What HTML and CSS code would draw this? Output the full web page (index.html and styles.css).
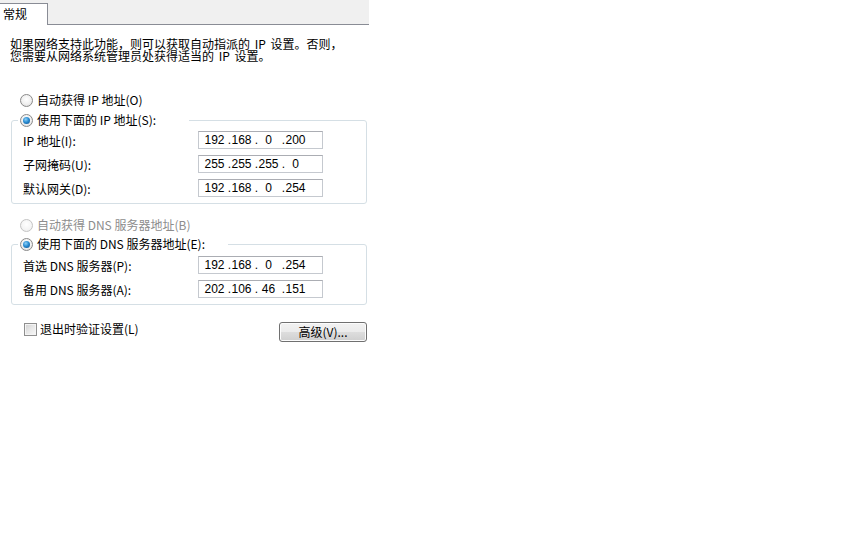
FILE: index.html
```html
<!DOCTYPE html>
<html lang="zh-CN">
<head>
<meta charset="utf-8">
<title>Internet 协议版本 4 (TCP/IPv4) 属性</title>
<link rel="stylesheet" href="styles.css">
</head>
<body>
<div class="panel">
  <div class="tabs">
    <div class="tab">常规</div>
  </div>
  <div class="intro">
    <div class="line">如果网络支持此功能，则可以获取自动指派的 IP 设置。否则，</div>
    <div class="line">您需要从网络系统管理员处获得适当的 IP 设置。</div>
  </div>

  <div class="radio-row first">
    <span class="radio"></span>
    <span>自动获得 IP 地址(O)</span>
  </div>
  <fieldset class="group g1">
    <legend class="legend l1"><span class="radio checked"></span><span>使用下面的 IP 地址(S):</span></legend>
    <div class="field">
      <span class="label">IP 地址(I):</span>
      <div class="ip"><span class="oct">192</span><span class="dot">.</span><span class="oct">168</span><span class="dot">.</span><span class="oct">0</span><span class="dot">.</span><span class="oct">200</span></div>
    </div>
    <div class="field">
      <span class="label">子网掩码(U):</span>
      <div class="ip"><span class="oct">255</span><span class="dot">.</span><span class="oct">255</span><span class="dot">.</span><span class="oct">255</span><span class="dot">.</span><span class="oct">0</span></div>
    </div>
    <div class="field">
      <span class="label">默认网关(D):</span>
      <div class="ip"><span class="oct">192</span><span class="dot">.</span><span class="oct">168</span><span class="dot">.</span><span class="oct">0</span><span class="dot">.</span><span class="oct">254</span></div>
    </div>
  </fieldset>

  <div class="radio-row second disabled">
    <span class="radio"></span>
    <span>自动获得 DNS 服务器地址(B)</span>
  </div>
  <fieldset class="group g2">
    <legend class="legend l2"><span class="radio checked"></span><span>使用下面的 DNS 服务器地址(E):</span></legend>
    <div class="field">
      <span class="label">首选 DNS 服务器(P):</span>
      <div class="ip"><span class="oct">192</span><span class="dot">.</span><span class="oct">168</span><span class="dot">.</span><span class="oct">0</span><span class="dot">.</span><span class="oct">254</span></div>
    </div>
    <div class="field">
      <span class="label">备用 DNS 服务器(A):</span>
      <div class="ip"><span class="oct">202</span><span class="dot">.</span><span class="oct">106</span><span class="dot">.</span><span class="oct">46</span><span class="dot">.</span><span class="oct">151</span></div>
    </div>
  </fieldset>

  <div class="bottom">
    <label class="check-row"><span class="checkbox"></span><span>退出时验证设置(L)</span></label>
    <button class="btn" type="button">高级(V)...</button>
  </div>
</div>
</body>
</html>
```

FILE: styles.css
```css
html, body {
  margin: 0;
  padding: 0;
  background: #ffffff;
}
body {
  font-family: "Noto Sans CJK SC", "Noto Sans", sans-serif;
  font-size: 12px;
  color: #000000;
}
.panel {
  width: 369px;
}
.tabs {
  height: 24px;
  background: #f0f0f0;
  border-bottom: 1px solid #898c95;
  display: flex;
  align-items: flex-end;
}
.tab {
  width: 44px;
  height: 21px;
  margin-bottom: -1px;
  padding-left: 3px;
  background: #ffffff;
  border-top: 1px solid #898c95;
  border-right: 1px solid #898c95;
  line-height: 19px;
}
.intro {
  margin: 13px 0 0 10px;
  white-space: nowrap;
  word-spacing: 2px;
}
.line {
  height: 12px;
  line-height: 12px;
}
.radio-row {
  display: flex;
  align-items: center;
  height: 16px;
  padding-left: 20px;
  gap: 4px;
  line-height: 16px;
}
.radio-row.first {
  margin-top: 30px;
}
.radio-row.second {
  margin-top: 13px;
}
.disabled {
  color: #8d8d8d;
}
.radio {
  box-sizing: border-box;
  width: 13px;
  height: 13px;
  border-radius: 50%;
  border: 1px solid #8a8a8a;
  background: radial-gradient(circle at 50% 40%, #ffffff 0%, #f0f0f0 55%, #d4d4d4 100%);
  display: inline-flex;
  align-items: center;
  justify-content: center;
  flex: none;
}
.disabled .radio {
  border-color: #c4c4c4;
  background: radial-gradient(circle at 50% 40%, #ffffff 0%, #f4f4f4 60%, #e6e6e6 100%);
}
.radio.checked::after {
  content: "";
  width: 7px;
  height: 7px;
  border-radius: 50%;
  background: radial-gradient(circle at 40% 35%, #8fd0f7 0%, #2b8ed3 45%, #0b4a8a 100%);
}
.group {
  margin: 3px 2px 0 11px;
  padding: 0 0 6px 0;
  border: 1px solid #d5dfe5;
  border-radius: 3px;
  min-width: 0;
}
.g1 {
  margin-top: 4px;
}
.legend {
  display: flex;
  align-items: center;
  gap: 4px;
  height: 16px;
  line-height: 16px;
  margin-left: 6px;
  padding: 0 33px 0 2px;
}
.l2 {
  padding-right: 23px;
}
.field {
  display: flex;
  align-items: center;
  height: 18px;
  margin-top: 6px;
}
.g1 .field:first-of-type {
  margin-top: 3px;
}
.g2 .field:first-of-type {
  margin-top: 4px;
}
.label {
  box-sizing: border-box;
  width: 186px;
  padding-left: 11px;
  white-space: nowrap;
}
.ip {
  box-sizing: border-box;
  width: 125px;
  height: 18px;
  border: 1px solid #c5c9cf;
  border-top-color: #abadb3;
  display: flex;
  align-items: center;
  padding-left: 5px;
  line-height: 16px;
  font-family: "Liberation Sans", "Noto Sans", sans-serif;
  font-size: 12px;
  color: #000;
}
.oct {
  width: 21px;
  text-align: center;
}
.dot {
  width: 6px;
  text-align: right;
}
.bottom {
  margin-top: 17px;
  display: flex;
  justify-content: space-between;
  align-items: flex-start;
  padding-right: 2px;
}
.check-row {
  display: flex;
  align-items: center;
  gap: 3px;
  padding-left: 24px;
  height: 14px;
  line-height: 14px;
}
.checkbox {
  box-sizing: border-box;
  width: 13px;
  height: 13px;
  border: 1px solid #8f8f8f;
  background: linear-gradient(135deg, #cfcfcf 0%, #e8e8e8 50%, #f8f8f8 100%);
  box-shadow: inset 0 0 0 1px #f4f4f4;
  flex: none;
}
.btn {
  box-sizing: border-box;
  width: 88px;
  height: 20px;
  margin: 0;
  padding: 0;
  border: 1px solid #707070;
  border-radius: 3px;
  background: linear-gradient(#f2f2f2 0%, #ebebeb 50%, #dddddd 51%, #cfcfcf 100%);
  box-shadow: inset 0 0 0 1px #fcfcfc;
  font-family: "Noto Sans CJK SC", "Noto Sans", sans-serif;
  font-size: 12px;
  line-height: 16px;
  color: #000;
}
```
